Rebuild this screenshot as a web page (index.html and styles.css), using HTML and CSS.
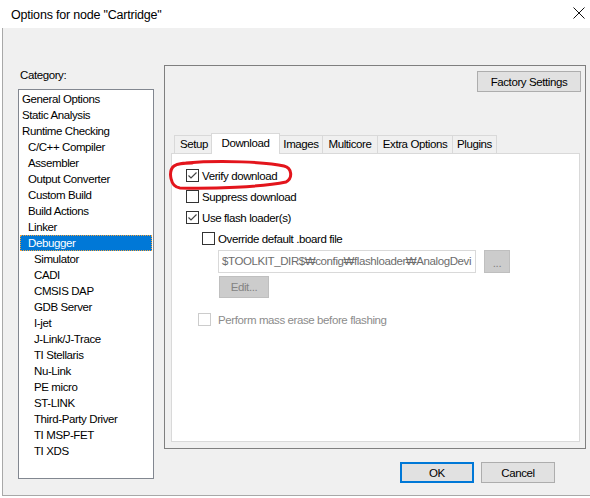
FILE: index.html
```html
<!DOCTYPE html>
<html>
<head>
<meta charset="utf-8">
<link rel="stylesheet" href="styles.css">
</head>
<body>
<div class="window">
  <div class="titlebar">
    <span class="title">Options for node "Cartridge"</span>
    <svg class="close" width="12" height="12" viewBox="0 0 12 12"><path d="M0.5 0.5L11.5 11.5M11.5 0.5L0.5 11.5" stroke="#111" stroke-width="1" fill="none"/></svg>
  </div>
  <div class="client">
    <div class="left">
      <div class="cat-label">Category:</div>
      <ul class="listbox">
        <li class="l0">General Options</li>
        <li class="l0">Static Analysis</li>
        <li class="l0">Runtime Checking</li>
        <li class="l1">C/C++ Compiler</li>
        <li class="l1">Assembler</li>
        <li class="l1">Output Converter</li>
        <li class="l1">Custom Build</li>
        <li class="l1">Build Actions</li>
        <li class="l1">Linker</li>
        <li class="l1 selected">Debugger</li>
        <li class="l2">Simulator</li>
        <li class="l2">CADI</li>
        <li class="l2">CMSIS DAP</li>
        <li class="l2">GDB Server</li>
        <li class="l2">I-jet</li>
        <li class="l2">J-Link/J-Trace</li>
        <li class="l2">TI Stellaris</li>
        <li class="l2">Nu-Link</li>
        <li class="l2">PE micro</li>
        <li class="l2">ST-LINK</li>
        <li class="l2">Third-Party Driver</li>
        <li class="l2">TI MSP-FET</li>
        <li class="l2">TI XDS</li>
      </ul>
    </div>
    <div class="right">
      <div class="group">
        <div class="group-top"><button class="btn factory">Factory Settings</button></div>
        <div class="tabs">
          <div class="tab t-setup">Setup</div>
          <div class="tab t-download sel">Download</div>
          <div class="tab t-images">Images</div>
          <div class="tab t-multi">Multicore</div>
          <div class="tab t-extra">Extra Options</div>
          <div class="tab t-plugins">Plugins</div>
        </div>
        <div class="panel">
          <label class="row">
            <svg class="cb" width="13" height="13" viewBox="0 0 13 13"><rect x="0.5" y="0.5" width="12" height="12" fill="#fff" stroke="#333"/><path d="M2.5 6.5L5 9L10.5 3.5" stroke="#444" stroke-width="1.2" fill="none"/></svg>
            <span>Verify download</span>
          </label>
          <label class="row">
            <svg class="cb" width="13" height="13" viewBox="0 0 13 13"><rect x="0.5" y="0.5" width="12" height="12" fill="#fff" stroke="#333"/></svg>
            <span>Suppress download</span>
          </label>
          <label class="row">
            <svg class="cb" width="13" height="13" viewBox="0 0 13 13"><rect x="0.5" y="0.5" width="12" height="12" fill="#fff" stroke="#333"/><path d="M2.5 6.5L5 9L10.5 3.5" stroke="#444" stroke-width="1.2" fill="none"/></svg>
            <span>Use flash loader(s)</span>
          </label>
          <label class="row indent">
            <svg class="cb" width="13" height="13" viewBox="0 0 13 13"><rect x="0.5" y="0.5" width="12" height="12" fill="#fff" stroke="#333"/></svg>
            <span>Override default .board file</span>
          </label>
          <div class="file-row">
            <div class="field"><span>$TOOLKIT_DIR$₩config₩flashloader₩AnalogDevi</span></div>
            <button class="btn disabled browse">...</button>
          </div>
          <button class="btn disabled edit">Edit...</button>
          <label class="row mass">
            <svg class="cb" width="13" height="13" viewBox="0 0 13 13"><rect x="0.5" y="0.5" width="12" height="12" fill="#fff" stroke="#cccccc"/></svg>
            <span class="dis">Perform mass erase before flashing</span>
          </label>
        </div>
      </div>
      <div class="buttons">
        <button class="btn ok">OK</button>
        <button class="btn">Cancel</button>
      </div>
    </div>
  </div>
  <svg class="annot" width="590" height="498" viewBox="0 0 590 498">
    <path d="M186 163 C220 160 268 162 284 166 C292 168 293 178 286 182 C262 187 212 189 180 188 C170 187 168 171 174 166 C178 163 184 163 192 163" stroke="#e3151c" stroke-width="3" fill="none" stroke-linecap="round"/>
  </svg>
</div>
</body>
</html>
```
FILE: styles.css
```css
* { box-sizing: border-box; }
html, body { margin: 0; padding: 0; background: #fff; }
body {
  font-family: "Liberation Sans", Arial, sans-serif;
  font-size: 11.5px;
  letter-spacing: -0.4px;
  color: #000;
}
.window { position: relative; width: 590px; height: 498px; overflow: hidden; }

.titlebar {
  height: 28px;
  display: flex;
  align-items: center;
  justify-content: space-between;
  padding: 0 5px 0 11px;
  background: #fff;
}
.title { font-size: 12.5px; letter-spacing: -0.2px; line-height: 16px; padding-top: 1px; }
.close { margin-top: -2px; }

.client {
  margin-left: 2px;
  height: 468px;
  border-left: 1px solid #a8a8a8;
  border-bottom: 1px solid #a8a8a8;
  background: #f0f0f0;
  display: flex;
  padding-left: 15px;
}

.left { width: 136px; padding-top: 39px; }
.cat-label { line-height: 16px; height: 16px; margin-left: 2px; margin-bottom: 6px; }
.listbox {
  list-style: none;
  margin: 0;
  padding: 1px 0 0;
  height: 390px;
  border: 1px solid #828790;
  background: #fff;
}
.listbox li { height: 16px; line-height: 16px; white-space: nowrap; }
.l0 { padding-left: 3px; }
.l1 { padding-left: 9px; }
.l2 { padding-left: 15px; }
.listbox li.selected {
  background: #0078d7;
  color: #fff;
  margin: 0 1px;
  padding-left: 8px;
  outline: 1px dotted #f3a33e;
  outline-offset: -1px;
}

.right { margin-left: 10px; padding-top: 37px; }
.group {
  width: 422px;
  height: 384px;
  border: 1px solid #7f7f7f;
  padding: 5px 4px 6px 6px;
  display: flex;
  flex-direction: column;
}
.group-top { display: flex; justify-content: flex-end; }

.btn {
  font: inherit;
  letter-spacing: inherit;
  color: #000;
  background: #e1e1e1;
  border: 1px solid #adadad;
  padding: 0;
  height: 21px;
  line-height: 18px;
  text-align: center;
}
.factory { width: 104px; }

.tabs {
  margin-top: 41px;
  height: 20px;
  display: flex;
  align-items: flex-end;
  padding-left: 3px;
  position: relative;
  z-index: 1;
}
.tab {
  height: 18px;
  line-height: 17px;
  border: 1px solid #d9d9d9;
  border-bottom: none;
  background: #f0f0f0;
  text-align: center;
  margin-right: -1px;
  white-space: nowrap;
}
.tab.sel {
  height: 21px;
  line-height: 18px;
  background: #fff;
  margin: 0 -1px -1px -2px;
  position: relative;
  z-index: 2;
}
.t-setup { width: 40px; }
.t-download { width: 69px; }
.t-images { width: 44px; }
.t-multi { width: 56px; }
.t-extra { width: 76px; }
.t-plugins { width: 45px; }

.panel {
  width: 409px;
  flex: 1;
  border: 1px solid #d9d9d9;
  background: #fff;
  padding: 11px 0 0 14px;
}
.row {
  display: flex;
  align-items: center;
  height: 21px;
  gap: 3px;
}
.cb { display: block; flex: none; }
.row.indent { margin-left: 16px; }
.file-row { display: flex; margin-left: 32px; margin-top: 1px; gap: 8px; }
.field {
  width: 258px;
  height: 23px;
  line-height: 21px;
  border: 1px solid #d9d9d9;
  background: #fff;
  color: #6d6d6d;
  padding-left: 3px;
  white-space: nowrap;
  overflow: hidden;
}
.btn.disabled { background: #cccccc; border-color: #bfbfbf; color: #838383; }
.browse { width: 26px; height: 23px; line-height: 24px; }
.edit { display: block; margin: 3px 0 0 33px; width: 50px; height: 22px; }
.row.mass { margin-top: 11px; margin-left: 12px; gap: 7px; }
.dis { color: #8c8c8c; }

.buttons {
  display: flex;
  justify-content: flex-end;
  gap: 7px;
  margin-top: 13px;
  padding-right: 31px;
}
.buttons .btn { width: 74px; }
.btn.ok { border: 2px solid #0078d7; line-height: 16px; }

.annot { position: absolute; left: 0; top: 0; pointer-events: none; }
```
